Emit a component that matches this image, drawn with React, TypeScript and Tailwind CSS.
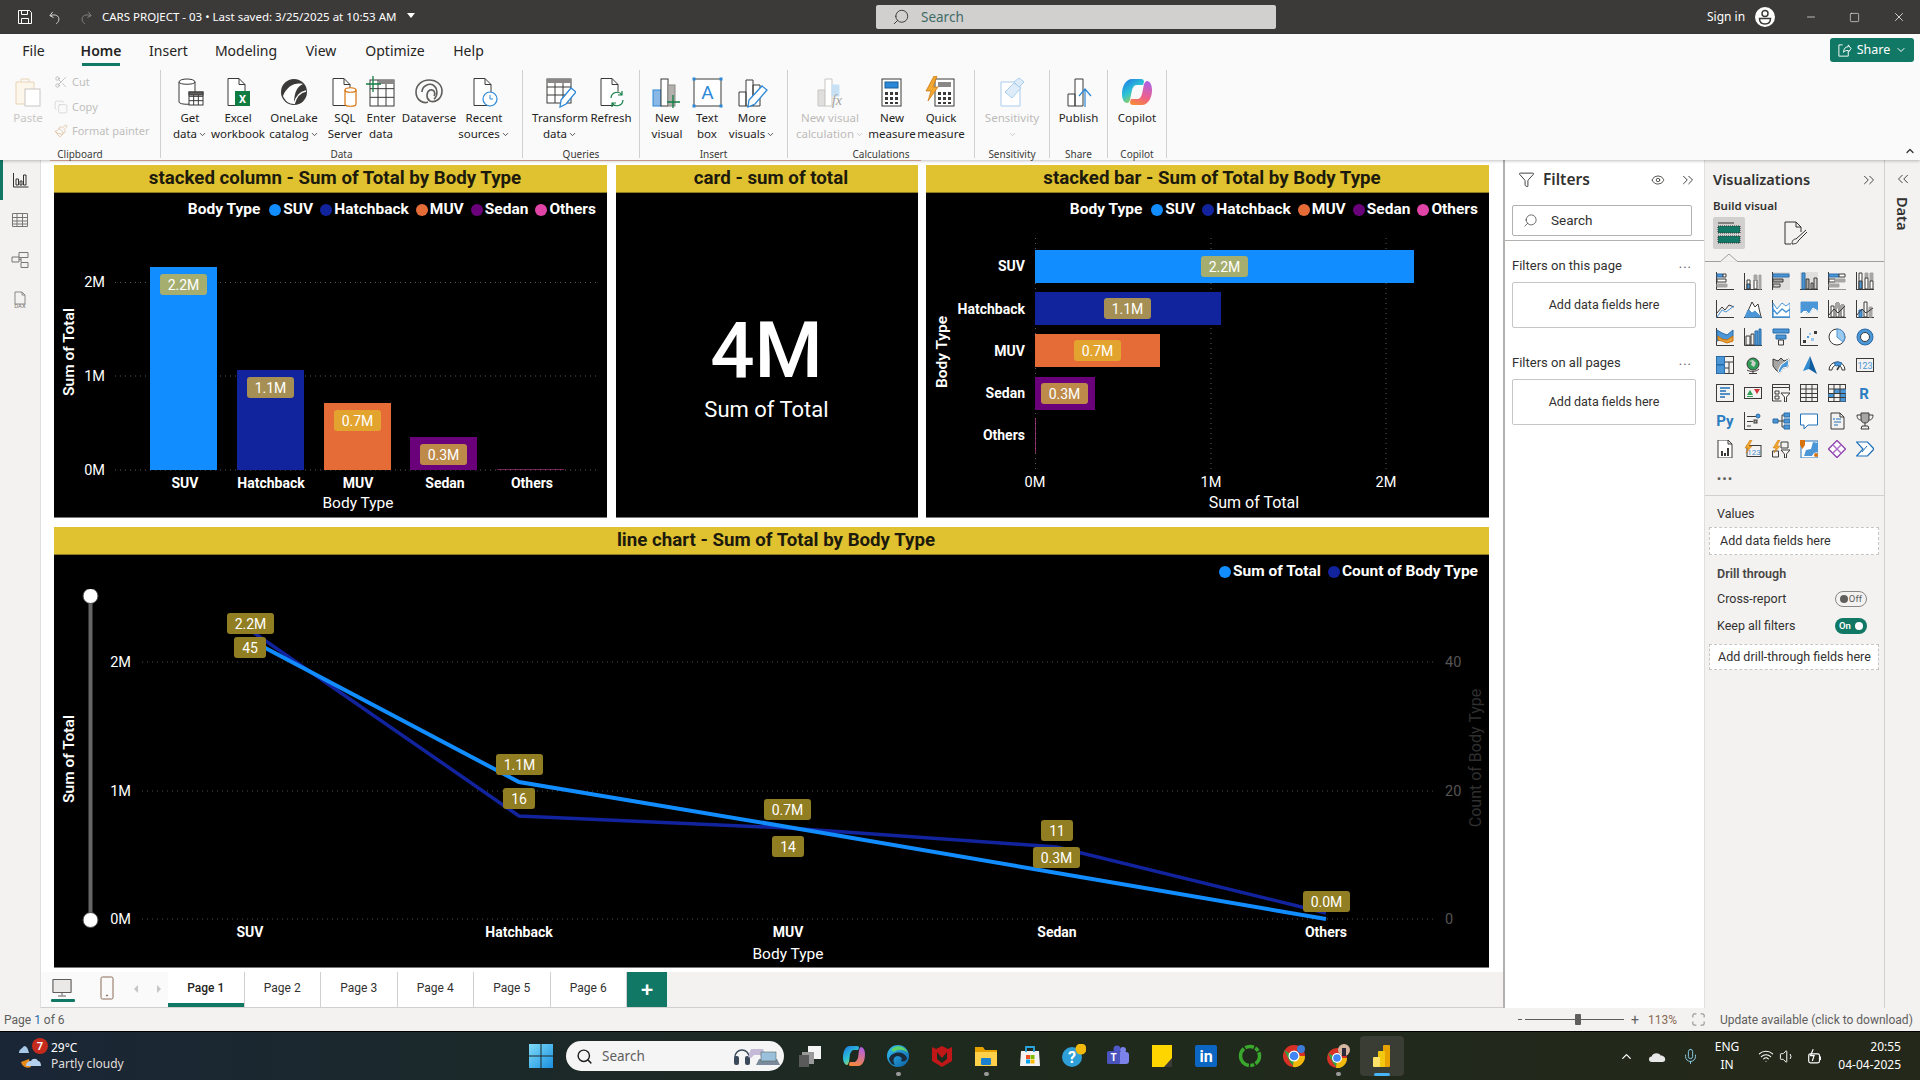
import { ChevronDown, ChevronUp, ChevronsLeft, ChevronsRight, Copy, Eye, Filter, Maximize, Minus, Mic, Paintbrush, Scissors, Search, Square, Volume1, Wifi, X } from "lucide-react";
import type { ReactNode } from "react";

const BLUE = "#118DFF";
const NAVY = "#12239E";
const ORANGE = "#E66C37";
const PURPLE = "#6B007B";
const PINK = "#E044A7";

const legendBody = [
  { name: "SUV", color: BLUE },
  { name: "Hatchback", color: NAVY },
  { name: "MUV", color: ORANGE },
  { name: "Sedan", color: PURPLE },
  { name: "Others", color: PINK },
];

function Legend({ title, items }: { title?: string; items: { name: string; color: string }[] }) {
  return (
    <div className="h-[34px] shrink-0 flex items-center justify-end gap-[7px] pr-[11px] text-white text-[15.5px] font-bold whitespace-nowrap">
      {title && <span className="mr-[2px]">{title}</span>}
      {items.map((it) => (
        <span key={it.name} className="flex items-center gap-[2px]">
          <span className="w-[12px] h-[12px] rounded-full" style={{ background: it.color }} />
          {it.name}
        </span>
      ))}
    </div>
  );
}

function Visual({ title, className, children }: { title: string; className: string; children: ReactNode }) {
  return (
    <div className={`flex flex-col shrink-0 font-['Roboto',sans-serif] ${className}`}>
      <div className="h-[28px] shrink-0 bg-[#e0c130] flex items-center justify-center pb-[1px] pl-[9px] text-[18.7px] font-bold text-[#1c1a0c] border-b border-[#8d7a20] whitespace-nowrap">{title}</div>
      <div className="flex-1 min-h-0 bg-black flex flex-col border-b border-[#777]">{children}</div>
    </div>
  );
}

function DataLabel({ x, y, w, h = 21, text, fill }: { x: number; y: number; w: number; h?: number; text: string; fill: string }) {
  return (
    <g>
      <rect x={x} y={y} width={w} height={h} rx={3} fill={fill} />
      <text x={x + w / 2} y={y + h / 2 + 0.5} textAnchor="middle" dominantBaseline="central" fontSize={14} fill="#fff">
        {text}
      </text>
    </g>
  );
}

function ColumnChart() {
  const bars = [
    { x: 150, y: 267, w: 67, c: BLUE, label: "2.2M", lf: "#a5ad6f", ly: 274 },
    { x: 237, y: 370, w: 67, c: NAVY, label: "1.1M", lf: "#a58f55", ly: 377 },
    { x: 324, y: 403, w: 67, c: ORANGE, label: "0.7M", lf: "#e3a32f", ly: 410 },
    { x: 410, y: 437, w: 67, c: PURPLE, label: "0.3M", lf: "#bd8a4a", ly: 444 },
  ];
  return (
    <svg viewBox="54 227 553 290" className="w-[553px] h-[290px] shrink-0">
      {[282.5, 376, 470].map((y) => (
        <line key={y} x1={115} x2={600} y1={y} y2={y} stroke="#5a5a5a" strokeDasharray="1 4" />
      ))}
      {[["2M", 282.5], ["1M", 376], ["0M", 470]].map(([t, y]) => (
        <text key={t} x={105} y={y} textAnchor="end" dominantBaseline="central" fontSize={14.5} fill="#fff">{t}</text>
      ))}
      {bars.map((b) => (
        <g key={b.x}>
          <rect x={b.x} y={b.y} width={b.w} height={470 - b.y} fill={b.c} />
          <DataLabel x={b.x + 10} y={b.ly} w={47} text={b.label} fill={b.lf} />
        </g>
      ))}
      <rect x={497} y={469} width={67} height={1} fill={PINK} opacity={0.5} />
      {[["SUV", 185], ["Hatchback", 271], ["MUV", 358], ["Sedan", 445], ["Others", 532]].map(([t, x]) => (
        <text key={t} x={x} y={483} textAnchor="middle" dominantBaseline="central" fontSize={14} fontWeight={700} fill="#fff">{t}</text>
      ))}
      <text x={358} y={503} textAnchor="middle" dominantBaseline="central" fontSize={15.5} fill="#fff">Body Type</text>
      <text x={69} y={352} transform="rotate(-90 69 352)" textAnchor="middle" dominantBaseline="central" fontSize={15.5} fontWeight={600} fill="#fff">Sum of Total</text>
    </svg>
  );
}

function BarChart() {
  const bars = [
    { y: 250, end: 1414, c: BLUE, label: "2.2M", lx: 1201, lf: "#a5ad6f" },
    { y: 292, end: 1221, c: NAVY, label: "1.1M", lx: 1104, lf: "#a58f55" },
    { y: 334, end: 1160, c: ORANGE, label: "0.7M", lx: 1074, lf: "#e3a32f" },
    { y: 377, end: 1095, c: PURPLE, label: "0.3M", lx: 1041, lf: "#bd8a4a" },
  ];
  return (
    <svg viewBox="926 227 563 290" className="w-[563px] h-[290px] shrink-0">
      {[1035.5, 1211, 1386].map((x) => (
        <line key={x} x1={x} x2={x} y1={238} y2={470} stroke="#5a5a5a" strokeDasharray="1 4" />
      ))}
      {bars.map((b) => (
        <g key={b.y}>
          <rect x={1035} y={b.y} width={b.end - 1035} height={33} fill={b.c} />
          <DataLabel x={b.lx} y={b.y + 6} w={47} text={b.label} fill={b.lf} />
        </g>
      ))}
      <rect x={1035} y={418} width={1} height={35} fill={PINK} opacity={0.6} />
      {[["SUV", 266], ["Hatchback", 309], ["MUV", 351], ["Sedan", 393], ["Others", 435]].map(([t, y]) => (
        <text key={t} x={1025} y={y} textAnchor="end" dominantBaseline="central" fontSize={14} fontWeight={700} fill="#fff">{t}</text>
      ))}
      {[["0M", 1035], ["1M", 1211], ["2M", 1386]].map(([t, x]) => (
        <text key={t} x={x} y={482} textAnchor="middle" dominantBaseline="central" fontSize={14.5} fill="#fff">{t}</text>
      ))}
      <text x={1254} y={502} textAnchor="middle" dominantBaseline="central" fontSize={16} fill="#fff">Sum of Total</text>
      <text x={942} y={352} transform="rotate(-90 942 352)" textAnchor="middle" dominantBaseline="central" fontSize={15.5} fontWeight={600} fill="#fff">Body Type</text>
    </svg>
  );
}

function LineChart() {
  const gold = "#917d22";
  return (
    <svg viewBox="54 589 1435 378" className="w-[1435px] h-[378px] shrink-0">
      {[662, 791, 919].map((y) => (
        <line key={y} x1={142} x2={1435} y1={y} y2={y} stroke="#4f4f4f" strokeDasharray="1 4" />
      ))}
      {[["2M", 662], ["1M", 791], ["0M", 919]].map(([t, y]) => (
        <text key={t} x={131} y={y} textAnchor="end" dominantBaseline="central" fontSize={14.5} fill="#fff">{t}</text>
      ))}
      {[["40", 662], ["20", 791], ["0", 919]].map(([t, y]) => (
        <text key={t} x={1445} y={y} dominantBaseline="central" fontSize={14.5} fill="#555">{t}</text>
      ))}
      <line x1={90.5} x2={90.5} y1={596} y2={920} stroke="#666" strokeWidth={4} />
      <circle cx={90.5} cy={596} r={7.5} fill="#fff" stroke="#444" />
      <circle cx={90.5} cy={920} r={7.5} fill="#fff" stroke="#444" />
      <polyline points="250,630 519,816 788,828 1057,847 1326,913" fill="none" stroke={NAVY} strokeWidth={3.5} />
      <polyline points="250,640 519,782 788,827 1057,873 1326,919" fill="none" stroke={BLUE} strokeWidth={4} />
      <DataLabel x={227} y={613} w={47} text="2.2M" fill={gold} />
      <DataLabel x={234} y={637} w={32} text="45" fill={gold} />
      <DataLabel x={496} y={754} w={47} text="1.1M" fill={gold} />
      <DataLabel x={503} y={788} w={32} text="16" fill={gold} />
      <DataLabel x={764} y={799} w={47} text="0.7M" fill={gold} />
      <DataLabel x={772} y={836} w={32} text="14" fill={gold} />
      <DataLabel x={1041} y={820} w={32} text="11" fill={gold} />
      <DataLabel x={1033} y={847} w={47} text="0.3M" fill={gold} />
      <DataLabel x={1303} y={891} w={47} text="0.0M" fill={gold} />
      {[["SUV", 250], ["Hatchback", 519], ["MUV", 788], ["Sedan", 1057], ["Others", 1326]].map(([t, x]) => (
        <text key={t} x={x} y={932} textAnchor="middle" dominantBaseline="central" fontSize={14} fontWeight={700} fill="#fff">{t}</text>
      ))}
      <text x={788} y={954} textAnchor="middle" dominantBaseline="central" fontSize={15.5} fill="#fff">Body Type</text>
      <text x={69} y={759} transform="rotate(-90 69 759)" textAnchor="middle" dominantBaseline="central" fontSize={15.5} fontWeight={600} fill="#fff">Sum of Total</text>
      <text x={1475} y={758} transform="rotate(-90 1475 758)" textAnchor="middle" dominantBaseline="central" fontSize={16} fill="#2f2f2f">Count of Body Type</text>
    </svg>
  );
}

/* ribbon icons, drawn on a 32 box */
const ink = "#3b3a39";
function R({ children }: { children: ReactNode }) {
  return (
    <svg viewBox="0 0 32 32" className="w-[32px] h-[32px]" fill="none" stroke={ink} strokeWidth={1}>
      {children}
    </svg>
  );
}
const Grid = ({ x, y, w, h }: { x: number; y: number; w: number; h: number }) => (
  <g>
    <rect x={x} y={y} width={w} height={h} fill="#fff" />
    <path d={`M${x} ${y + h / 3}h${w}M${x} ${y + (2 * h) / 3}h${w}M${x + w / 3} ${y}v${h}M${x + (2 * w) / 3} ${y}v${h}`} />
  </g>
);

const ribbonIcons: Record<string, ReactNode> = {
  getData: <R><path d="M5 6c0-4 16-4 16 0v20c0 3-16 3-16 0z" fill="#fff" /><path d="M5 6c0 3 16 3 16 0" /><Grid x={15} y={16} w={14} h={13} /><rect x={15} y={16} width={14} height={3} fill="#605e5c" /></R>,
  excel: <R><path d="M6 2.5h11l6 6v21H6z M17 2.5v6h6" fill="#fff" /><rect x={13} y={15} width={15} height={15} fill="#107c41" stroke="none" /><text x={20.5} y={27} textAnchor="middle" fontSize={11} fontWeight={700} fill="#fff" stroke="none" fontFamily="Roboto">X</text></R>,
  lake: <R><circle cx={16} cy={16} r={13} fill="#3b3a39" stroke="none" /><path d="M5 20c4-10 12-14 20-12-5 2-9 7-9 20-5 0-9-3-11-8z" fill="#fff" stroke="none" /><path d="M16 28c2-7 6-12 12-13" stroke="#fff" strokeWidth={1.5} /></R>,
  sql: <R><path d="M4 2.5h11l6 6v21H4z M15 2.5v6h6" fill="#fff" /><path d="M16 14c0-3 11-3 11 0v14c0 3-11 3-11 0z" fill="#fff" stroke="#d9730d" strokeWidth={1.2} /><path d="M16 14c0 3 11 3 11 0" stroke="#d9730d" strokeWidth={1.2} /></R>,
  enter: <R><Grid x={5} y={4} w={24} h={26} /><rect x={14} y={4} width={15} height={4} fill="#8a8886" stroke="none" /><path d="M8 0v16M1 8h15" stroke="#107c41" strokeWidth={1.3} /></R>,
  dataverse: <R><path d="M16 4c8 0 13 5 13 11 0 8-7 12-12 10-4-2-4-9 0-11 4-1 6 3 4 6M16 4C9 4 3 9 3 16c0 8 7 12 12 10" stroke="#605e5c" strokeWidth={1.6} /><path d="M9 16c0-6 7-9 11-7 5 3 5 11 1 14" stroke="#605e5c" strokeWidth={1.6} /></R>,
  recent: <R><path d="M6 2.5h11l6 6v21H6z M17 2.5v6h6" fill="#fff" /><circle cx={22} cy={23} r={7} fill="#fff" stroke="#2b88d8" strokeWidth={1.2} /><path d="M22 19v4h3" stroke="#2b88d8" /></R>,
  transform: <R><Grid x={3} y={3} w={24} h={24} /><rect x={3} y={3} width={24} height={4} fill="#8a8886" stroke="none" /><path d="M16 31l1-7L27 12l5 4-10 12z" fill="#fff" stroke="#2b88d8" strokeWidth={1.3} /></R>,
  refresh: <R><path d="M6 2.5h11l6 6v21H6z M17 2.5v6h6" fill="#fff" /><circle cx={22} cy={23} r={7.5} fill="#fff" stroke="none" /><path d="M16 22a6 6 0 0 1 11-3M28 24a6 6 0 0 1-11 3M27 15v4h-4M17 31v-4h4" stroke="#107c41" strokeWidth={1.2} /></R>,
  newVisual: <R><rect x={2} y={14} width={8} height={16} fill="#8ab8e6" stroke="#2b88d8" /><rect x={10} y={3} width={7} height={27} fill="#fff" /><rect x={17} y={9} width={7} height={21} fill="#b3b0ad" stroke="#8a8886" /><path d="M22 19v13M16 26h13" stroke="#107c41" strokeWidth={1.3} /></R>,
  textBox: <R><rect x={3} y={3} width={27} height={27} fill="#fff" /><text x={16.5} y={23} textAnchor="middle" fontSize={19} fill="#2b88d8" stroke="none" fontFamily="Roboto">A</text><path d="M1.5 1.5h3v3h-3zM28.5 1.5h3v3h-3zM1.5 28.5h3v3h-3zM28.5 28.5h3v3h-3z" fill="#2b88d8" stroke="none" /></R>,
  more: <R><path d="M3 16h7v14H3zM10 4h7v26h-7zM17 9h7v21h-7z" fill="#fff" /><path d="M12 31l1-7L26 10l5 4L19 28z" fill="#fff" stroke="#2b88d8" strokeWidth={1.3} /></R>,
  calc: <R><g stroke="#c8c6c4"><path d="M4 14h7v16H4z" fill="#e1dfdd" /><path d="M11 3h7v27h-7z" fill="#fff" /><path d="M18 9h7v11h-7z" fill="#c7e0f4" stroke="#c7e0f4" /></g><text x={23} y={29} textAnchor="middle" fontSize={14} fontStyle="italic" fill="#a19f9d" stroke="none" fontFamily="Liberation Serif">fx</text></R>,
  measure: <R><rect x={6} y={3} width={19} height={27} fill="#fff" /><rect x={9} y={6} width={13} height={6} fill="#2b88d8" stroke="#1a5e9c" /><path d="M9 16h3v3H9zM14 16h3v3h-3zM19 16h3v3h-3zM9 21h3v3H9zM14 21h3v3h-3zM19 21h3v3h-3zM9 26h3v2H9zM14 26h3v2h-3zM19 26h3v2h-3z" fill="#3b3a39" stroke="none" /></R>,
  quick: <R><rect x={10} y={3} width={19} height={27} fill="#fff" /><rect x={13} y={6} width={13} height={5} fill="#8a8886" stroke="none" /><path d="M13 16h3v3h-3zM18 16h3v3h-3zM23 16h3v3h-3zM13 21h3v3h-3zM18 21h3v3h-3zM23 21h3v3h-3zM13 26h3v2h-3zM18 26h3v2h-3zM23 26h3v2h-3z" fill="#3b3a39" stroke="none" /><path d="M9 0L1 15h5l-3 10 10-14H8l4-11z" fill="#f2a72e" stroke="#c8710b" strokeWidth={0.7} /></R>,
  sens: <R><g stroke="#a9cdec"><path d="M5 6h19v24H5z" fill="#fff" /><path d="M9 16l9-9 7 5-9 10z" fill="#deecf9" /><path d="M18 6l5-4 5 4-5 5z" fill="#deecf9" /></g></R>,
  publish: <R><path d="M5 18h7v12H5zM12 3h8v27h-8z" fill="#fff" /><path d="M22 31V13M16 20l6-7 6 7" stroke="#2b88d8" strokeWidth={1.2} /></R>,
};

function Copilot() {
  return (
    <svg viewBox="0 0 32 32" className="w-[32px] h-[32px]">
      <defs>
        <linearGradient id="cpa" x1="0" y1="0" x2="0.6" y2="1"><stop offset="0" stopColor="#1e74e8" /><stop offset="0.55" stopColor="#2cc3d5" /><stop offset="1" stopColor="#b4d33a" /></linearGradient>
        <linearGradient id="cpb" x1="0.6" y1="0" x2="0.3" y2="1"><stop offset="0" stopColor="#b15fe0" /><stop offset="0.6" stopColor="#ee5f8c" /><stop offset="1" stopColor="#f6883a" /></linearGradient>
      </defs>
      <path d="M11 3h9c2 0 3 1 3 3l-1 3h-6c-3 0-4 2-5 5l-2 10c-1 2-1 3-3 3-3 0-5-4-5-9C1 10 5 3 11 3z" fill="url(#cpa)" />
      <path d="M21 29h-9c-2 0-3-1-3-3l1-3h6c3 0 4-2 5-5l2-10c1-2 2-3 3-3 3 0 5 4 5 9 0 8-4 15-10 15z" fill="url(#cpb)" />
    </svg>
  );
}

function RibbonBtn({ w, icon, lines, caret, off }: { w: number; icon: ReactNode; lines: string[]; caret?: boolean; off?: boolean }) {
  return (
    <div className={`flex flex-col items-center shrink-0 pt-[6px] text-[11.5px] leading-[16px] whitespace-nowrap ${off ? "text-[#bdbbb9]" : "text-[#252423]"}`} style={{ width: w }}>
      <div className="h-[32px] mb-[2px]">{icon}</div>
      {lines.map((l, i) => (
        <span key={i} className="flex items-center justify-center h-[16px] gap-[1px]">
          {l}
          {caret && i === lines.length - 1 && <ChevronDown size={9} strokeWidth={2} />}
        </span>
      ))}
    </div>
  );
}

function Group({ label, children, className }: { label: string; children: ReactNode; className: string }) {
  return (
    <div className={`shrink-0 h-[88px] border-r border-[#d2d0ce] flex flex-col ${className}`}>
      <div className="h-[76px] shrink-0 flex">{children}</div>
      <div className="h-[14px] shrink-0 mt-[1px] text-[10px] leading-[14px] text-center text-[#3b3a39]">{label}</div>
    </div>
  );
}

function SmallAction({ icon, label }: { icon: ReactNode; label: string }) {
  return (
    <div className="h-[24.5px] flex items-center gap-[4px] text-[11px] text-[#c0bebc] whitespace-nowrap">
      <span className="w-[14px] flex justify-center">{icon}</span>
      {label}
    </div>
  );
}

function Ribbon() {
  return (
    <div className="relative z-10 h-[126px] shrink-0 bg-[#fafafa] shadow-[0_1px_3px_rgba(0,0,0,0.25)] flex flex-col">
      <div className="h-[36px] flex items-start justify-between pr-[6px] text-[14px] text-[#252423]">
        <div className="flex items-center h-[32px]">
          {[["File", 23, 0], ["Home", 38, 1], ["Insert", 35, 0], ["Modeling", 58, 0], ["View", 30, 0], ["Optimize", 56, 0], ["Help", 29, 0]].map(([t, w, on], i) => (
            <div key={t as string} className={`relative h-full flex items-center justify-center whitespace-nowrap ${on ? "font-semibold" : ""} ${i === 0 ? "ml-[22px]" : i === 1 ? "ml-[37px]" : "ml-[31px]"}`} style={{ width: w as number }}>
              {t}
              {on ? <span className="absolute left-0 right-0 top-[29px] h-[3px] bg-[#117865]" /> : null}
            </div>
          ))}
        </div>
        <div className="h-[24px] w-[84px] mt-[4px] rounded-[3px] bg-[#117865] text-white text-[12.5px] flex items-center justify-center gap-[5px]">
          <svg viewBox="0 0 16 16" className="w-[15px] h-[15px]" fill="none" stroke="#fff"><path d="M6 2H2v12h10v-4M7 10c0-4 2-6 5-6V2l3 4-3 4V8c-2 0-4 0-5 2z" /></svg>
          Share <ChevronDown size={12} />
        </div>
      </div>
      <div className="flex-1 flex items-start relative">
        <Group label="Clipboard" className="w-[161px]">
          <div className="flex pl-[8px]">
            <div className="w-[40px] flex flex-col items-center pt-[6px] text-[11.5px] text-[#c8c6c4]">
              <svg viewBox="0 0 32 32" className="w-[32px] h-[32px]" fill="none" stroke="#e8d3b4"><path d="M4 6h18v22H4z" fill="#fdf6ea" /><path d="M9 6V3h8v3" /><rect x={13} y={13} width={15} height={17} fill="#fff" stroke="#c8c6c4" /></svg>
              <span className="mt-[2px] leading-[16px]">Paste</span>
            </div>
            <div className="ml-[6px]">
              <SmallAction icon={<Scissors size={14} strokeWidth={1} color="#a19f9d" />} label="Cut" />
              <SmallAction icon={<Copy size={14} strokeWidth={1} color="#c8c6c4" />} label="Copy" />
              <SmallAction icon={<Paintbrush size={14} strokeWidth={1} color="#d0a878" />} label="Format painter" />
            </div>
          </div>
        </Group>
        <Group label="Data" className="w-[362px]">
          <div className="flex pl-[8px]">
            <RibbonBtn w={42} icon={ribbonIcons.getData} lines={["Get", "data"]} caret />
            <RibbonBtn w={54} icon={ribbonIcons.excel} lines={["Excel", "workbook"]} />
            <RibbonBtn w={58} icon={ribbonIcons.lake} lines={["OneLake", "catalog"]} caret />
            <RibbonBtn w={44} icon={ribbonIcons.sql} lines={["SQL", "Server"]} />
            <RibbonBtn w={28} icon={ribbonIcons.enter} lines={["Enter", "data"]} />
            <RibbonBtn w={68} icon={ribbonIcons.dataverse} lines={["Dataverse"]} />
            <RibbonBtn w={42} icon={ribbonIcons.recent} lines={["Recent", "sources"]} caret />
          </div>
        </Group>
        <Group label="Queries" className="w-[117px]">
          <div className="flex pl-[10px]">
            <RibbonBtn w={54} icon={ribbonIcons.transform} lines={["Transform", "data"]} caret />
            <RibbonBtn w={48} icon={ribbonIcons.refresh} lines={["Refresh"]} />
          </div>
        </Group>
        <Group label="Insert" className="w-[148px]">
          <div className="flex pl-[7px]">
            <RibbonBtn w={40} icon={ribbonIcons.newVisual} lines={["New", "visual"]} />
            <RibbonBtn w={40} icon={ribbonIcons.textBox} lines={["Text", "box"]} />
            <RibbonBtn w={50} icon={ribbonIcons.more} lines={["More", "visuals"]} caret />
          </div>
        </Group>
        <Group label="Calculations" className="w-[187px]">
          <div className="flex pl-[7px]">
            <RibbonBtn w={70} off icon={ribbonIcons.calc} lines={["New visual", "calculation"]} caret />
            <RibbonBtn w={54} icon={ribbonIcons.measure} lines={["New", "measure"]} />
            <RibbonBtn w={44} icon={ribbonIcons.quick} lines={["Quick", "measure"]} />
          </div>
        </Group>
        <Group label="Sensitivity" className="w-[75px]">
          <RibbonBtn w={74} off icon={ribbonIcons.sens} lines={["Sensitivity", ""]} caret />
        </Group>
        <Group label="Share" className="w-[58px]">
          <RibbonBtn w={57} icon={ribbonIcons.publish} lines={["Publish"]} />
        </Group>
        <Group label="Copilot" className="w-[59px]">
          <RibbonBtn w={58} icon={<Copilot />} lines={["Copilot"]} />
        </Group>
        <ChevronUp size={12} strokeWidth={2.5} color="#323130" className="absolute right-[4px] bottom-[3px]" />
      </div>
    </div>
  );
}

function TitleBar() {
  return (
    <div className="h-[34px] shrink-0 bg-[#3b3a39] flex items-center text-white">
      <svg viewBox="0 0 16 16" className="w-[16px] h-[16px] ml-[17px] shrink-0" fill="none" stroke="#fff"><path d="M1.5 1.5h11l2 2v11h-13z M4.5 14.5v-5h7v5 M4.5 1.5v4h6v-4" /></svg>
      <svg viewBox="0 0 16 16" className="w-[15px] h-[15px] ml-[15px] shrink-0" fill="none" stroke="#e1dfdd"><path d="M5 2L2 6l4 2M2.5 6c5-2 10 0 9 5-.4 2-2 3-3 4" /></svg>
      <svg viewBox="0 0 16 16" className="w-[15px] h-[15px] ml-[15px] shrink-0" fill="none" stroke="#8a8886"><path d="M11 2l3 4-4 2M13.5 6c-5-2-10 0-9 5 .4 2 2 3 3 4" /></svg>
      <span className="ml-[9px] w-[298px] shrink-0 text-[11.5px] whitespace-nowrap">CARS PROJECT - 03 • Last saved: 3/25/2025 at 10:53 AM</span>
      <svg viewBox="0 0 8 5" className="w-[8px] h-[5px] ml-[7px] -mt-[3px] shrink-0"><path d="M0 0h8L4 5z" fill="#fff" /></svg>
      <div className="ml-[461px] w-[400px] h-[24px] shrink-0 rounded-[2px] bg-[#d2d0ce] flex items-center text-[13.5px] text-[#3f6b68]">
        <Search size={18} strokeWidth={1.2} color="#323130" className="ml-[16px] -scale-x-100" />
        <span className="ml-[11px]">Search</span>
      </div>
      <span className="ml-[431px] text-[12px] shrink-0">Sign in</span>
      <span className="ml-[10px] w-[20px] h-[20px] shrink-0 rounded-full bg-white flex items-center justify-center">
        <svg viewBox="0 0 20 20" className="w-[20px] h-[20px]" fill="none" stroke="#3b3a39" strokeWidth={1.5}><circle cx={10} cy={6.5} r={3} /><path d="M4.5 11.5h11c0 4-2.5 5.5-5.5 5.5s-5.5-1.5-5.5-5.5z" /></svg>
      </span>
      <Minus size={12} className="ml-[30px] shrink-0" strokeWidth={1.3} />
      <Square size={11} className="ml-[32px] shrink-0" strokeWidth={1.3} />
      <X size={14} className="ml-[32px] shrink-0" strokeWidth={1.3} />
    </div>
  );
}

/* left rail */
function LeftRail() {
  return (
    <div className="w-[41px] shrink-0 bg-[#f3f2f1] border-r border-[#e1dfdd] flex flex-col items-center">
      <div className="self-stretch h-[40px] border-l-[3px] border-[#117865] flex items-center justify-center pr-[2px]">
        <svg viewBox="0 0 16 16" className="w-[16px] h-[16px]" fill="none" stroke="#323130"><path d="M.5 1v14h15M3 13V7h2.5v6zM7 13V9h2v4zM10.5 13V3H13v10z" /></svg>
      </div>
      <div className="h-[40px] flex items-center">
        <svg viewBox="0 0 16 16" className="w-[16px] h-[16px]" fill="none" stroke="#797775"><path d="M.5 1.5h15v13H.5zM.5 5.5h15M.5 9h15M.5 12h15M5 1.5v13M10.5 1.5v13" /></svg>
      </div>
      <div className="h-[40px] flex items-center">
        <svg viewBox="0 0 18 18" className="w-[18px] h-[18px]" fill="none" stroke="#797775"><path d="M8 1.5h9v5H8zM1 6h7v5H1zM10 11.5h7v5h-7zM10 7v4M8 8.5h2" /></svg>
      </div>
      <div className="h-[40px] flex items-center">
        <svg viewBox="0 0 18 18" className="w-[18px] h-[18px]" fill="none" stroke="#8a8886"><path d="M4 1h7l3 3v9H4zM11 1v3h3" /><text x={9} y={17} textAnchor="middle" fontSize={6} fill="#797775" stroke="none" fontFamily="Roboto">DAX</text></svg>
      </div>
    </div>
  );
}

function PageTabs() {
  return (
    <div className="h-[36px] shrink-0 flex bg-[#f3f2f1] border-b border-[#d2d0ce]">
      <div className="w-[127px] shrink-0 bg-[#fafafa] flex items-start relative">
        <svg viewBox="0 0 22 22" className="absolute left-[10px] top-[5px] w-[22px] h-[22px]" fill="none" stroke="#605e5c"><path d="M2 2.5h18v13H2zM11 15.5v3M7 19h8" /><rect x={2} y={2.5} width={18} height={13} fill="#e1dfdd" opacity={0.6} /></svg>
        <span className="absolute left-[10px] top-[27px] w-[24px] h-[3px] rounded-[1px] bg-[#117865]" />
        <svg viewBox="0 0 14 24" className="absolute left-[59px] top-[4px] w-[14px] h-[24px]" fill="none" stroke="#8a6a55"><rect x={1} y={1} width={12} height={22} rx={1.5} /><circle cx={7} cy={19.5} r={0.6} fill="#605e5c" /></svg>
        <span className="absolute left-[93px] top-[13px] border-y-[4px] border-y-transparent border-r-[4px] border-r-[#c8c6c4]" />
        <span className="absolute left-[116px] top-[13px] border-y-[4px] border-y-transparent border-l-[4px] border-l-[#c8c6c4]" />
      </div>
      {["Page 1", "Page 2", "Page 3", "Page 4", "Page 5", "Page 6"].map((p, i) => (
        <div key={p} className={`relative w-[76.5px] shrink-0 bg-white border-r border-[#d2d0ce] flex items-center justify-center pb-[3px] text-[12px] font-['Roboto',sans-serif] ${i === 0 ? "text-[#252423] font-medium" : "text-[#323130]"}`}>
          {p}
          {i === 0 && <span className="absolute left-0 right-0 bottom-0 h-[4px] bg-[#117865]" />}
        </div>
      ))}
      <div className="w-[40px] shrink-0 bg-[#117865] text-white flex items-center justify-center text-[22px] font-bold leading-none pb-[3px]">+</div>
    </div>
  );
}

function Canvas() {
  return (
    <div className="w-[1462px] shrink-0 flex flex-col bg-white">
      <div className="h-[812px] shrink-0 pl-[13px] pr-[14px] flex flex-col">
        <div className="h-[1px] w-[871px] -ml-[4px] mb-[4px] shrink-0 bg-[#e8b4a0]" />
        <div className="h-[353px] shrink-0 flex gap-[8.5px]">
          <Visual title="stacked column - Sum of Total by Body Type" className="w-[553px]">
            <Legend title="Body Type" items={legendBody} />
            <ColumnChart />
          </Visual>
          <Visual title="card - sum of total" className="w-[302px]">
            <div className="flex-1 flex flex-col items-center pt-[116px] text-white whitespace-nowrap">
              <span className="text-[78px] leading-[84px] font-medium">4M</span>
              <span className="text-[22px] leading-[30px] mt-[2px]">Sum of Total</span>
            </div>
          </Visual>
          <Visual title="stacked bar - Sum of Total by Body Type" className="w-[563px]">
            <Legend title="Body Type" items={legendBody} />
            <BarChart />
          </Visual>
        </div>
        <div className="h-[9px] shrink-0" />
        <Visual title="line chart - Sum of Total by Body Type" className="h-[441px]">
          <Legend items={[{ name: "Sum of Total", color: BLUE }, { name: "Count of Body Type", color: NAVY }]} />
          <LineChart />
        </Visual>
      </div>
      <PageTabs />
    </div>
  );
}

function FiltersPane() {
  const box = "w-[184px] h-[46px] border border-[#c8c6c4] rounded-[2px] flex items-center justify-center text-[12.5px] text-[#323130] pt-[1px]";
  const head = "h-[18px] flex items-center justify-between w-[180px] text-[13px] text-[#323130]";
  return (
    <div className="w-[202px] shrink-0 bg-white border-l-2 border-[#b3b0ad] border-r border-r-[#e1dfdd] flex flex-col font-['Roboto',sans-serif]">
      <div className="h-[81px] shrink-0 border-b border-[#b3b0ad] pl-[7px]">
        <div className="h-[38px] pt-[1px] flex items-center text-[15.5px] font-semibold font-['Noto_Sans',sans-serif] text-[#323130]">
          <Filter size={17} strokeWidth={1.3} className="ml-[6px] shrink-0" />
          <span className="ml-[8px] w-[46px]">Filters</span>
          <Eye size={14} strokeWidth={1.4} className="ml-[62px] shrink-0" />
          <ChevronsRight size={18} strokeWidth={1.2} className="ml-[14px] shrink-0" />
        </div>
        <div className="mt-[7px] w-[180px] h-[31px] border border-[#b3b0ad] rounded-[2px] flex items-center text-[13.5px] text-[#323130]">
          <Search size={15} strokeWidth={1.1} className="ml-[10px] -scale-x-100" />
          <span className="ml-[13px]">Search</span>
        </div>
      </div>
      <div className="pl-[7px] pt-[16px]">
        <div className={head}>Filters on this page <span className="text-[#605e5c] tracking-[1px] -mt-[5px]">...</span></div>
        <div className={`${box} mt-[7px]`}>Add data fields here</div>
        <div className={`${head} mt-[26px]`}>Filters on all pages <span className="text-[#605e5c] tracking-[1px] -mt-[5px]">...</span></div>
        <div className={`${box} mt-[7px]`}>Add data fields here</div>
      </div>
    </div>
  );
}

/* visualization gallery, 18 box */
const B = "#4a96d6";
const G = "#a8a6a4";
const K = "#3b3a39";
const gallery: ReactNode[] = [
  <><path d="M.5 0v17.5H18" /><path d="M1 2h6v3H1z" fill={B} stroke="#2b6ca8" /><path d="M7 2h3v3H7z" fill="#fff" /><path d="M1 7h9v3H1z" fill="#fff" /><path d="M1 12h10v3H1z" fill={G} stroke={G} /></>,
  <><path d="M0 17.5h18M.5 1v17" /><path d="M3 8h3v9H3zM10 8h3v9h-3z" fill="#fff" stroke={K} /><path d="M3 12h3v5H3z" fill={B} /><path d="M10 3h3v5h-3zM15 3h2v14h-2z" fill={G} stroke={G} /></>,
  <><rect width={18} height={18} fill="#e1dfdd" stroke="none" /><path d="M.5 0v18" /><path d="M1 2h16v3H1z" fill={B} stroke="#2b6ca8" /><path d="M1 7h10v3H1z" fill={G} stroke={K} /><path d="M1 12h7v3H1z" fill="#d2d0ce" stroke={K} /></>,
  <><rect width={18} height={18} fill="#e1dfdd" stroke="none" /><path d="M0 17.5h18" /><path d="M2 1h3v16H2z" fill={B} stroke="#2b6ca8" /><path d="M6 7h3v10H6z" fill={G} stroke={K} /><path d="M11 11h2v6h-2zM14 6h3v11h-3z" fill="#d2d0ce" stroke={K} /></>,
  <><path d="M.5 0v18H18" /><path d="M1 2h10v3H1z" fill={B} stroke="#2b6ca8" /><path d="M11 2h6v3h-6z" fill="#fff" /><path d="M1 7h6v3H1z" fill="#fff" /><path d="M7 7h10v3H7zM1 12h10v3H1z" fill={G} stroke={G} /></>,
  <><path d="M0 17.5h18M.5 0v18" /><path d="M3 1h3v16H3z" fill="#fff" /><path d="M3 9h3v8H3z" fill={B} /><path d="M9 1h3v5H9z" fill={G} stroke={G} /><path d="M9 6h3v11H9z" fill="#fff" /><path d="M14 1h3v8h-3z" fill={G} stroke={G} /><path d="M14 9h3v8h-3z" fill="#fff" /></>,

  <><path d="M.5 0v17.5H18" /><path d="M1 13l5-6 3 3 4-5 5 2" /><path d="M1 17l5-7 4 2 8-6" stroke={B} /></>,
  <><path d="M0 17.5h18" /><path d="M1 17l3-7 4 3 2-4 4 8H1" fill="#9cc9ee" stroke={B} /><path d="M4 11l4-9 3 5 3-3 3 13H10" fill="#fff" /><path d="M1 17l4-7 3 3 3-2 6 6z" fill={B} stroke={B} /></>,
  <><path d="M.5 0v17.5H18" /><path d="M1 3l4 6 5-6 4 3 4-3v14H1z" fill="#fff" stroke={B} /><path d="M1 9l4 5 5-5 4 3 4-3v8H1z" fill="#fff" stroke={B} strokeWidth={1.4} /></>,
  <><path d="M.5 17.5H18" /><path d="M1 2h17v9l-5-3-4 6-5-4-3 3z" fill={B} stroke={B} /><path d="M1 16l5-5 3 3 4-6 5 3" stroke="#fff" /></>,
  <><path d="M.5 0v17.5H18" /><path d="M3 6h3v11H3zM8 3h3v14H8zM13 5h3v12h-3z" fill="#fff" /><path d="M8 3h3v5H8zM13 5h3v4h-3z" fill={G} stroke={G} /><path d="M1 15l5-6 4 4 7-7" stroke={K} /></>,
  <><path d="M.5 0v17.5H18" /><path d="M3 10h3v7H3z" fill={B} stroke="#2b6ca8" /><path d="M8 2h3v15H8z" fill="#fff" /><path d="M13 7h3v10h-3z" fill={G} stroke={G} /><path d="M1 15l5-6 4 4 7-5" stroke={K} /></>,

  <><path d="M.5 0v17.5H18" /><path d="M1 2l5 3 5 2 6-5v6l-6 5-5-2-5 2z" fill={B} stroke="#2b6ca8" /><path d="M2 8l4 3 5 1 6-4v5l-6 2-5-2-4-1z" fill="#e8a33a" stroke="#c8710b" /></>,
  <><path d="M.5 0v17.5H18" /><path d="M2 8h4v9H2z" /><path d="M7 6h3v11H7z" /><path d="M11 3h3v14h-3z" fill={B} stroke="#2b6ca8" /><path d="M15 1h2v16h-2z" fill={B} stroke="#2b6ca8" /></>,
  <><path d="M1 1h16v4H1z" fill={B} stroke="#2b6ca8" /><path d="M4 7h10v4H4z" fill={B} stroke="#2b6ca8" /><path d="M6.5 12h5v5h-5z" /></>,
  <><path d="M.5 0v17.5H18" stroke={K} /><g stroke="none"><rect x={3} y={12} width={3} height={3} fill={K} /><rect x={7} y={8} width={2} height={2} fill={B} /><rect x={11} y={10} width={3} height={3} fill="#9cc9ee" /><rect x={14} y={3} width={3} height={3} fill={K} /><rect x={9} y={5} width={2} height={2} fill="#9cc9ee" /></g></>,
  <><circle cx={9} cy={9} r={8} fill="#fff" /><path d="M9 9V1a8 8 0 0 1 6 13z" fill="#9cc9ee" stroke={B} /></>,
  <><circle cx={9} cy={9} r={8} fill={B} stroke="#2b6ca8" /><circle cx={9} cy={9} r={4.5} fill="#fff" stroke={K} /></>,

  <><rect x={.5} y={.5} width={17} height={17} /><path d="M.5 .5h8v8h-8zM.5 9h8v8.5h-8z" fill={B} stroke="#2b6ca8" /><path d="M9 6h8.5M13 6v11.5M9 12h4" /></>,
  <><circle cx={9} cy={8} r={6} fill="#2e9e57" stroke={K} /><path d="M5 5l3 1-1 3 3 2 2-4-3-3" fill="#d2d0ce" stroke="none" /><path d="M3 14c3 2 9 2 12-1M9 15v3M5 17.5h8" /></>,
  <><path d="M1 3l5 2 3-3 3 3 5-2-1 8-5 1-3 5-4-3-3-4z" fill={G} stroke={K} /><path d="M9 9l8-6-1 8-5 1-3 5-2-2z" fill={B} stroke="#fff" /></>,
  <><path d="M10 0L3 15l6-2z" fill="#2f8bd1" stroke="none" /><path d="M10 0l7 18-8-5z" fill="#0f5c9e" stroke="none" /></>,
  <><path d="M1 14a8 8 0 0 1 16 0h-3a5 5 0 0 0-10 0z" fill="#fff" /><path d="M9 14l3-5" stroke={K} strokeWidth={1.5} /><path d="M6 7a8 8 0 0 1 8 0l-2 3a5 5 0 0 0-4 0z" fill={B} stroke="#2b6ca8" /></>,
  <><rect x={.5} y={2.5} width={17} height={13} /><text x={9} y={13} textAnchor="middle" fontSize={9} fill={B} stroke="none" fontFamily="Roboto">123</text></>,

  <><rect x={.5} y={.5} width={17} height={17} /><path d="M4 4h10M4 7h6M4 10h10M4 13h5" stroke="#1f70b8" strokeWidth={1.3} /></>,
  <><rect x={.5} y={3.5} width={17} height={11} /><path d="M3 11l3-5 3 5z" fill="#2e9e57" stroke="none" /><path d="M10 5h6l-3 5z" fill="#d13438" stroke="none" /><path d="M3 12.5h6" stroke="#2e9e57" /></>,
  <><path d="M.5 .5h17v3H.5zM.5 .5V17h9M17.5 3.5v3" /><path d="M3 7h4v3H3zM3 12h4v3H3z" /><path d="M9 9h9l-3.5 4v5h-2v-5z" fill="#fff" /></>,
  <><rect x={.5} y={.5} width={17} height={17} /><path d="M.5 5h17M.5 9.5h17M.5 13.5h17M6 .5v17M12 .5v17" /></>,
  <><rect x={.5} y={.5} width={17} height={17} /><path d="M6 5h12v4.5H6zM.5 9.5H6v4H.5zM12 9.5h5.5v8H12z" fill={B} stroke="none" /><path d="M.5 5h17M.5 9.5h17M.5 13.5h17M6 .5v17M12 .5v17" /></>,
  <text x={8} y={14.5} textAnchor="middle" fontSize={15} fontWeight={700} fill="#2b7cc0" stroke="none" fontFamily="Roboto">R</text>,

  <text x={9} y={14} textAnchor="middle" fontSize={15} fontWeight={700} fill="#2b7cc0" stroke="none" fontFamily="Roboto">Py</text>,
  <><path d="M.5 0v17.5H18M3 4.5h9M3 9.5h6M3 14h4" /><circle cx={14} cy={4} r={2} fill={B} stroke="#2b6ca8" /><rect x={10} y={8} width={3} height={3} fill={G} /></>,
  <><path d="M1 7h5v4H1z" fill={B} stroke="#2b6ca8" /><path d="M6 9h4M10 3v12M10 3h2M10 9h2M10 15h2" /><path d="M12 1h6v4h-6zM12 7h6v4h-6zM12 13h6v4h-6z" fill={B} stroke="#2b6ca8" /></>,
  <path d="M.5 2h17v11H8l-4 4v-4H.5z" stroke="#1f70b8" fill="#fff" />,
  <><path d="M3 1h9l4 4v12H3zM12 1v4h4" /><circle cx={6} cy={7} r={1} fill={B} stroke="none" /><path d="M8 7h5M6 10h7M6 13h4" stroke="#1f70b8" /></>,
  <><path d="M5 1h8v6c0 3-2 4-4 4s-4-1-4-4z" fill={G} /><path d="M5 3H1c0 4 2 5 4 5M13 3h4c0 4-2 5-4 5M9 11v3M5 17l1-3h6l1 3z" /></>,

  <><path d="M2 0h10l4 4v14H2zM12 0v4h4" fill="#fff" /><path d="M5 11h2v5H5zM8 13h2v3H8zM11 8h2v8h-2z" fill={K} stroke="none" /></>,
  <><rect x={3} y={5.5} width={14} height={11} /><text x={10} y={14.5} textAnchor="middle" fontSize={8} fill={B} stroke="none" fontFamily="Roboto">123</text><path d="M6 0L1 8h3l-2 5 6-7H5l3-6z" fill="#f2a72e" stroke="#c8710b" strokeWidth={.5} /></>,
  <><path d="M.5 11h6v6h-6zM9 2h7v6H9z" /><path d="M9 10h9l-3.5 4v4h-2v-4z" fill="#fff" /><path d="M6 0L1 8h3l-2 5 6-7H5l3-6z" fill="#f2a72e" stroke="#c8710b" strokeWidth={.5} /></>,
  <><rect x={1} y={1} width={17} height={17} fill="#fff" stroke="#1f70b8" /><path d="M4 16l2-6 5-1 2-7 5 1v9l-4 1-2 3z" fill={B} stroke="none" /><path d="M0 0h5v5l-2.5 4L0 5z" fill="#d9730d" stroke="none" /><circle cx={16} cy={15} r={2} fill="#d9730d" stroke="none" /></>,
  <><path d="M9 .5l8.5 8.5L9 17.5.5 9z" stroke="#8e44ad" strokeWidth={1.4} fill="#fff" /><path d="M5 5l8 8M13 5l-8 8" stroke="#b073c9" strokeWidth={1.6} /></>,
  <><path d="M.5 2h11L18 9l-6.5 7H.5L7 9z" stroke="#1f70b8" strokeWidth={1.2} fill="#fff" /><path d="M6 12l5-6" stroke="#1f70b8" /></>,
];

function Toggle({ on }: { on?: boolean }) {
  return on ? (
    <span className="w-[32px] h-[16px] rounded-full bg-[#117865] flex items-center justify-between px-[4px] text-[9.5px] font-semibold text-white shrink-0">
      On<span className="w-[8px] h-[8px] rounded-full bg-white" />
    </span>
  ) : (
    <span className="w-[32px] h-[16px] rounded-full border border-[#8a8886] flex items-center justify-between px-[4px] text-[9.5px] text-[#605e5c] shrink-0">
      <span className="w-[8px] h-[8px] rounded-full bg-[#605e5c]" />Off
    </span>
  );
}

function VizPane() {
  return (
    <div className="w-[180px] shrink-0 bg-[#f3f2f1] border-r border-[#d2d0ce] flex flex-col text-[#323130]">
      <div className="h-[38px] pt-[1px] shrink-0 flex items-center justify-between pl-[8px] pr-[6px] text-[14.5px] font-semibold">
        Visualizations <ChevronsRight size={18} strokeWidth={1.2} />
      </div>
      <div className="pl-[8px] h-[16px] text-[11.5px] leading-[16px] font-semibold">Build visual</div>
      <div className="relative h-[48px] shrink-0 border-b border-[#a19f9d]">
        <div className="flex items-start mt-[3px] pl-[8px]">
          <div className="w-[32px] h-[32px] rounded-[2px] bg-[#d2d0ce] flex items-center justify-center">
            <svg viewBox="0 0 24 24" className="w-[24px] h-[24px]" fill="none"><path d="M1 2h16" stroke="#323130" /><rect x={1} y={5} width={22} height={7} fill="#117865" stroke="#323130" strokeDasharray="1 1" /><rect x={1} y={15} width={22} height={7} fill="#117865" stroke="#323130" strokeDasharray="1 1" /></svg>
          </div>
          <svg viewBox="0 0 24 24" className="w-[24px] h-[24px] ml-[38px] mt-[4px]" fill="none" stroke="#323130"><path d="M2 1h11l5 5v5M13 1v5h5M2 1v22h6" /><path d="M23 9L13 18c-2 0-4 1-4 5 3 0 6-1 6-3L24 11" /></svg>
        </div>
        <svg viewBox="0 0 18 8" className="absolute left-[15px] bottom-[-1px] w-[18px] h-[8px]"><path d="M0 8L9 0l9 8z" fill="#f3f2f1" stroke="#a19f9d" /><path d="M1 8h16" stroke="#f3f2f1" strokeWidth={1.5} /></svg>
      </div>
      <div className="pl-[6px] pt-[5px] grid grid-cols-[repeat(6,28px)] auto-rows-[28px]">
        {gallery.map((g, i) => (
          <div key={i} className="flex items-center justify-center">
            <svg viewBox="0 0 18 18" className="w-[18px] h-[18px]" fill="none" stroke={K} strokeWidth={1}>{g}</svg>
          </div>
        ))}
        <div className="flex items-center justify-center text-[16px] font-bold tracking-[1px] pb-[6px] text-[#605e5c]">...</div>
      </div>
      <div className="h-[5px] shrink-0 border-b border-[#d2d0ce]" />
      <div className="pl-[4px] pt-[9px] text-[12.5px] font-['Roboto',sans-serif]">
        <div className="pl-[8px] h-[18px] leading-[18px]">Values</div>
        <div className="mt-[4px] w-[170px] h-[28px] bg-white border border-dashed border-[#c8c6c4] flex items-center pl-[10px]">Add data fields here</div>
        <div className="pl-[8px] mt-[10px] h-[18px] leading-[18px] font-semibold text-[#484644]">Drill through</div>
        <div className="pl-[8px] mt-[7px] h-[18px] w-[158px] flex items-center justify-between">Cross-report <Toggle /></div>
        <div className="pl-[8px] mt-[9px] h-[18px] w-[158px] flex items-center justify-between">Keep all filters <Toggle on /></div>
        <div className="mt-[9px] w-[170px] h-[26px] bg-white border border-dashed border-[#c8c6c4] flex items-center pl-[8px] whitespace-nowrap">Add drill-through fields here</div>
      </div>
    </div>
  );
}

function DataStrip() {
  return (
    <div className="w-[35px] shrink-0 bg-[#f3f2f1] flex flex-col items-center text-[#323130]">
      <ChevronsLeft size={18} strokeWidth={1.2} className="mt-[10px]" />
      <span className="mt-[9px] text-[14.5px] font-semibold [writing-mode:vertical-rl]">Data</span>
    </div>
  );
}

function StatusBar() {
  return (
    <div className="h-[23px] shrink-0 bg-[#f3f2f1] flex items-center text-[12px] text-[#605e5c] whitespace-nowrap font-['Roboto',sans-serif]">
      <span className="ml-[4px] w-[70px]">Page <span className="text-[#2b6ca8]">1</span> of 6</span>
      <span className="ml-[1444px] w-[4px] h-[1.5px] bg-[#605e5c]" />
      <span className="relative ml-[3px] w-[99px] h-[1.5px] bg-[#605e5c]">
        <span className="absolute left-[50px] top-[-5px] w-[6px] h-[11px] rounded-[1px] bg-[#605e5c]" />
      </span>
      <span className="ml-[7px] w-[8px] text-[14px] leading-none">+</span>
      <span className="ml-[9px] w-[29px] text-[#8a6a55]">113%</span>
      <Maximize size={15} strokeWidth={1.2} className="ml-[14px] shrink-0" />
      <span className="ml-[14px]">Update available (click to download)</span>
    </div>
  );
}

function TaskIcon({ children, dot, active }: { children: ReactNode; dot?: boolean; active?: boolean }) {
  return (
    <div className={`relative w-[44px] h-[40px] shrink-0 flex items-center justify-center rounded-[4px] ${active ? "bg-[#3a3d33]" : ""}`}>
      <svg viewBox="0 0 24 24" className="w-[24px] h-[24px]">{children}</svg>
      {dot && <span className="absolute bottom-[0px] left-1/2 -ml-[2px] w-[5px] h-[4px] rounded-full bg-[#9a9a9a]" />}
      {active && <span className="absolute bottom-[0px] left-1/2 -ml-[8px] w-[16px] h-[3px] rounded-full bg-[#47b4f5]" />}
    </div>
  );
}

function Taskbar() {
  return (
    <div className="h-[49px] shrink-0 border-t border-black bg-linear-to-r from-[#1a2636] via-[#1e2a1d] to-[#24281a] flex items-center text-white font-['Noto_Sans',sans-serif]">
      <div className="w-[529px] shrink-0 flex items-center">
        <div className="relative ml-[17px] w-[30px] h-[36px]">
          <svg viewBox="0 0 30 36" className="w-[30px] h-[36px]"><path d="M2 15c0-4 3-4 5-7 3 0 4 3 5 7z" fill="#a8c8e8" /><path d="M4 24a7 7 0 0 0 10 5l-2-8z" fill="#e88a1a" /><path d="M9 28c0-4 3-5 5-5 1-3 6-3 7 0 2 0 3 2 3 5z" fill="#b4d0ee" /></svg>
          <span className="absolute left-[15px] top-[0px] w-[16px] h-[16px] rounded-full bg-[#c42b1c] text-[11px] font-semibold flex items-center justify-center">7</span>
        </div>
        <div className="ml-[4px] text-[12px] leading-[16px]">
          <div>29°C</div>
          <div className="text-[#e1dfdd]">Partly cloudy</div>
        </div>
      </div>
      <svg viewBox="0 0 24 24" className="w-[24px] h-[24px] shrink-0">
        <defs><linearGradient id="win" x1="0" y1="0" x2="1" y2="1"><stop offset="0" stopColor="#7fdcf7" /><stop offset="1" stopColor="#1a8fe0" /></linearGradient></defs>
        <path d="M0 0h11.5v11.5H0zM12.5 0H24v11.5H12.5zM0 12.5h11.5V24H0zM12.5 12.5H24V24H12.5z" fill="url(#win)" />
      </svg>
      <div className="ml-[13px] w-[218px] h-[30px] shrink-0 rounded-full bg-[#f5f5f5] flex items-center text-[#605e5c] text-[13.5px] relative">
        <Search size={17} strokeWidth={2} color="#201f1e" className="ml-[10px]" />
        <span className="ml-[9px]">Search</span>
        <svg viewBox="0 0 50 26" className="absolute right-[2px] top-[2px] w-[50px] h-[26px]">
          <path d="M3 14a7 7 0 0 1 14 0" fill="none" stroke="#3b4a5a" strokeWidth={1.5} /><rect x={2} y={13} width={5} height={9} rx={2} fill="#3b4a5a" /><rect x={13} y={13} width={5} height={9} rx={2} fill="#3b4a5a" />
          <path d="M19 6h12l3 8-3 1-3-3h-6l-3 3-3-1z" fill="#c4b9d6" /><path d="M27 16h18l3 6H24z" fill="#7a8a9a" /><rect x={29} y={9} width={15} height={9} fill="#9ac0dc" stroke="#566" strokeWidth={0.6} />
        </svg>
      </div>
      <div className="ml-[4px] flex items-center">
        <TaskIcon><rect x={10} y={2} width={13} height={13} fill="#f5f5f5" /><rect x={4} y={8} width={12} height={12} fill="#9a9a9a" /><rect x={1} y={11} width={10} height={12} fill="#5a5a5a" /></TaskIcon>
        <TaskIcon>
          <defs>
            <linearGradient id="tca" x1="0" y1="0" x2="0.6" y2="1"><stop offset="0" stopColor="#1e74e8" /><stop offset="0.6" stopColor="#2cc3d5" /><stop offset="1" stopColor="#c8d83a" /></linearGradient>
            <linearGradient id="tcb" x1="0.6" y1="0" x2="0.3" y2="1"><stop offset="0" stopColor="#b15fe0" /><stop offset="1" stopColor="#f6883a" /></linearGradient>
          </defs>
          <path d="M8 2h7c2 0 2 1 2 2l-1 2h-4c-2 0-3 2-4 4l-1 8c-1 2-1 3-2 3-2 0-4-3-4-7C1 8 3 2 8 2z" fill="url(#tca)" />
          <path d="M16 22H9c-2 0-2-1-2-2l1-2h4c2 0 3-2 4-4l1-8c1-2 1-3 2-3 2 0 4 3 4 7 0 6-2 12-7 12z" fill="url(#tcb)" />
        </TaskIcon>
        <TaskIcon dot>
          <defs><linearGradient id="edge" x1="0" y1="0" x2="1" y2="1"><stop offset="0" stopColor="#35c1f1" /><stop offset="1" stopColor="#0b5fa8" /></linearGradient></defs>
          <circle cx={12} cy={12} r={11} fill="url(#edge)" />
          <path d="M3 15c2-8 15-9 18-1 0 3-4 4-6 3 1-1 2-4-3-5-4 0-6 4-3 9-3 0-5-3-6-6z" fill="#1a2a3a" />
          <path d="M5 6c4-6 14-5 17 3-4-4-11-4-14-1z" fill="#5ed46a" />
        </TaskIcon>
        <TaskIcon><path d="M2 3l4 2 6-3 6 3 4-2v14l-10 6L2 17z" fill="#c01818" /><path d="M7 8l5 6 5-6v7l-5 4-5-4z" fill="#1e2a1d" /></TaskIcon>
        <TaskIcon dot><path d="M1 3h8l2 3h12v6H1z" fill="#e8a200" /><path d="M1 8h22v14H1z" fill="#ffd04a" /><rect x={7} y={14} width={10} height={7} rx={1} fill="#1a80d0" /></TaskIcon>
        <TaskIcon><path d="M3 7h18l1 15H2z" fill="#f2f2f2" /><path d="M8 8V3h8v5" fill="none" stroke="#2aa5e0" strokeWidth={1.8} /><path d="M8 11h4v4H8z" fill="#f25022" /><path d="M12.5 11h4v4h-4z" fill="#7fba00" /><path d="M8 15.5h4v4H8z" fill="#00a4ef" /><path d="M12.5 15.5h4v4h-4z" fill="#ffb900" /></TaskIcon>
        <TaskIcon><circle cx={10} cy={13} r={10} fill="#2f9fd8" /><text x={10} y={19} textAnchor="middle" fontSize={16} fontWeight={700} fill="#fff" fontFamily="Roboto">?</text><circle cx={19} cy={5} r={5.5} fill="#f2b90d" /></TaskIcon>
        <TaskIcon><circle cx={17} cy={6} r={3} fill="#7b83eb" /><circle cx={11} cy={5} r={3.5} fill="#5059c9" /><rect x={10} y={8} width={13} height={12} rx={3} fill="#7b83eb" /><rect x={1} y={7} width={13} height={13} rx={1.5} fill="#4b53bc" /><text x={7.5} y={17} textAnchor="middle" fontSize={10} fontWeight={700} fill="#fff" fontFamily="Roboto">T</text></TaskIcon>
        <TaskIcon><path d="M2 1h20v22H2z" fill="#ffd500" /><path d="M14 23l8-9v9z" fill="#3b3a39" /></TaskIcon>
        <TaskIcon><rect x={1} y={1} width={22} height={22} rx={2} fill="#0a66c2" /><text x={12} y={18} textAnchor="middle" fontSize={16} fontWeight={700} fill="#fff" fontFamily="Roboto">in</text></TaskIcon>
        <TaskIcon><circle cx={12} cy={12} r={9.5} fill="none" stroke="#3aa82c" strokeWidth={3.5} strokeDasharray="9 1.5 4 1.5 22 1.5" /></TaskIcon>
        <TaskIcon>
          <circle cx={12} cy={12} r={11} fill="#d93025" /><path d="M2 6l6 12 4 5c6 0 11-5 11-11H12z" fill="#2ea043" /><path d="M23 12H12l-1 11c6 1 12-4 12-11z" fill="#f2b90d" /><circle cx={12} cy={12} r={5.5} fill="#fff" /><circle cx={12} cy={12} r={4.3} fill="#4285f4" />
          <circle cx={19} cy={5} r={4} fill="#3d7bd6" />
        </TaskIcon>
        <TaskIcon dot>
          <circle cx={11} cy={14} r={10} fill="#d93025" /><path d="M2 9l5 10 4 5c6 0 10-5 10-10H11z" fill="#2ea043" /><path d="M21 14H11l-1 10c6 1 11-4 11-10z" fill="#f2b90d" /><circle cx={11} cy={14} r={5} fill="#fff" /><circle cx={11} cy={14} r={3.8} fill="#4285f4" />
          <circle cx={18} cy={6} r={6} fill="#d8b7a0" /><path d="M16 4h4v8h-4z" fill="#2a2a3a" />
        </TaskIcon>
        <TaskIcon active><rect x={13} y={1} width={7} height={22} rx={1} fill="#e8a200" /><rect x={8} y={7} width={7} height={16} rx={1} fill="#f2c811" /><rect x={3} y={13} width={7} height={10} rx={1} fill="#ffe26a" /></TaskIcon>
      </div>
      <div className="flex-1" />
      <div className="w-[310px] shrink-0 flex items-center text-[12px] pr-[19px]">
        <span className="w-[32px] flex justify-center"><ChevronUp size={15} strokeWidth={2} /></span>
        <span className="w-[32px] flex justify-center">
          <svg viewBox="0 0 20 16" className="w-[18px] h-[15px]"><path d="M3 14a3 3 0 0 1 0-6c1-4 8-5 10-1 4 0 5 3 5 4 0 2-1 3-3 3z" fill="#e8e8e8" /></svg>
        </span>
        <span className="w-[32px] flex justify-center"><Mic size={17} strokeWidth={1.3} color="#8fd3f0" /></span>
        <span className="w-[42px] text-center leading-[18px]">ENG<br />IN</span>
        <Wifi size={16} strokeWidth={1.6} className="ml-[10px]" />
        <Volume1 size={17} strokeWidth={1.4} className="ml-[5px]" />
        <svg viewBox="0 0 20 18" className="w-[18px] h-[17px] ml-[10px]" fill="none" stroke="#fff" strokeWidth={1.3}><rect x={3} y={6} width={12} height={10} rx={2} /><path d="M16 9v4M8 1L5 8h4l-2 6" /></svg>
        <div className="flex-1 text-right leading-[18px]">20:55<br />04-04-2025</div>
      </div>
    </div>
  );
}

export default function App() {
  return (
    <div className="w-[1920px] h-[1080px] overflow-hidden flex flex-col bg-white font-['Noto_Sans',sans-serif]">
      <TitleBar />
      <Ribbon />
      <div className="h-[848px] shrink-0 flex">
        <LeftRail />
        <Canvas />
        <FiltersPane />
        <VizPane />
        <DataStrip />
      </div>
      <StatusBar />
      <Taskbar />
    </div>
  );
}
